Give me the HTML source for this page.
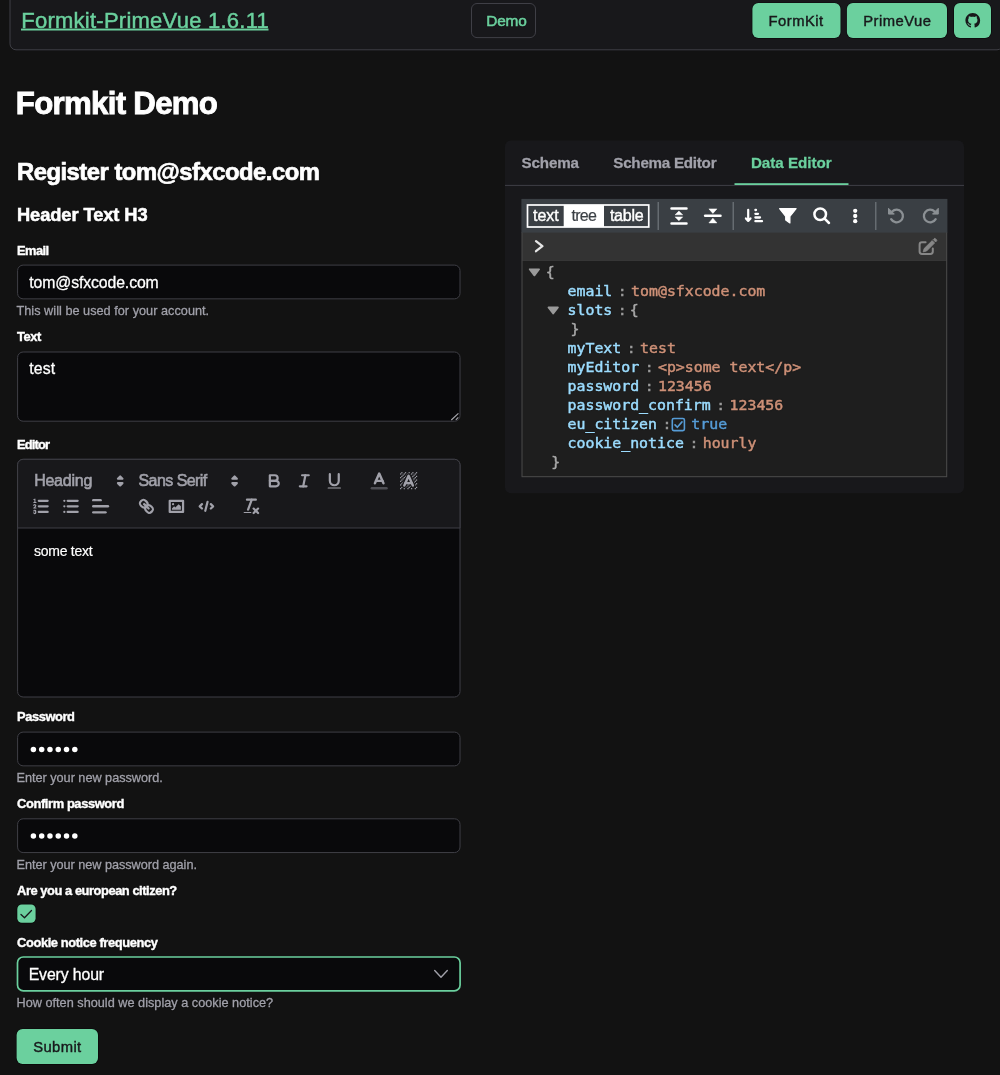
<!DOCTYPE html>
<html lang="en">
<head>
<meta charset="utf-8">
<title>Formkit-PrimeVue Demo</title>
<style>
html,body{margin:0;padding:0;background:#121212;}
body{width:1000px;height:1075px;position:relative;overflow:hidden;font-family:"Liberation Sans",sans-serif;color:#fff;}
*{box-sizing:border-box;}
.a{position:absolute;}
.t{position:absolute;white-space:pre;line-height:1;text-shadow:0 0 1.2px rgba(0,0,0,.75);}
.t.d{text-shadow:none;}
svg{position:absolute;overflow:visible;}
.q{stroke:#a1a1aa;fill:none;stroke-width:2;stroke-linecap:round;stroke-linejoin:round;}
.qf{fill:#a1a1aa;stroke:none;}
.qt{stroke-width:1;}
</style>
</head>
<body>
<svg style="left:0;top:0" width="1000" height="1075" viewBox="0 0 1000 1075">
<rect x="10.0" y="-10" width="993.00" height="59.80" rx="6" fill="#18181b" stroke="#3f3f46" stroke-width="1"/>
<rect x="471.5" y="3.5" width="64.00" height="34.10" rx="5.5" fill="none" stroke="#3f3f46" stroke-width="1"/>
<rect x="752.4" y="3.1" width="88.10" height="35.00" rx="6" fill="#6bd09e" stroke="rgba(0,0,0,.55)" stroke-width="1.4" paint-order="stroke"/>
<rect x="846.9" y="3.1" width="100.10" height="35.00" rx="6" fill="#6bd09e" stroke="rgba(0,0,0,.55)" stroke-width="1.4" paint-order="stroke"/>
<rect x="954.0" y="3.1" width="37.00" height="35.00" rx="6" fill="#6bd09e" stroke="rgba(0,0,0,.55)" stroke-width="1.4" paint-order="stroke"/>
<rect x="17.6" y="265.1" width="442.40" height="33.75" rx="5.5" fill="#09090b" stroke="#3f3f46" stroke-width="1"/>
<rect x="17.6" y="352.0" width="442.40" height="69.20" rx="5.5" fill="#09090b" stroke="#3f3f46" stroke-width="1"/>
<rect x="17.6" y="459.3" width="442.40" height="237.70" rx="5.5" fill="#09090b" stroke="#3f3f46" stroke-width="1"/>
<path d="M17.6 528V464.8A5.5 5.5 0 0 1 23.1 459.3H454.5A5.5 5.5 0 0 1 460.0 464.8V528Z" fill="#18181b" stroke="#3f3f46" stroke-width="1"/>
<rect x="17.6" y="732.1" width="442.40" height="33.75" rx="5.5" fill="#09090b" stroke="#3f3f46" stroke-width="1"/>
<rect x="17.6" y="818.8" width="442.40" height="33.75" rx="5.5" fill="#09090b" stroke="#3f3f46" stroke-width="1"/>
<rect x="17.5" y="957.0" width="442.60" height="33.90" rx="5.8" fill="#09090b" stroke="#6bd09e" stroke-width="1.7"/>
<rect x="17.3" y="904.4" width="18.30" height="18.30" rx="4.5" fill="#6bd09e" stroke="rgba(0,0,0,.55)" stroke-width="1.4" paint-order="stroke"/>
<rect x="16.6" y="1029.1" width="81.40" height="35.00" rx="6" fill="#6bd09e" stroke="rgba(0,0,0,.55)" stroke-width="1.4" paint-order="stroke"/>
<rect x="505" y="140.5" width="459.00" height="352.70" rx="6" fill="#18181b"/>
<rect x="505" y="184.9" width="459" height="1" fill="#3f3f46"/>
<rect x="734.5" y="183.2" width="114" height="1.8" fill="#6bd09e"/>
<rect x="521.5" y="232" width="425.7" height="245.2" fill="#4b4b4b"/>
<rect x="522.5" y="260.8" width="423.7" height="215.4" fill="#1e1e1e"/>
<rect x="522.5" y="232" width="423.7" height="28.8" fill="#333333"/>
<rect x="521.4" y="198.9" width="426" height="33.7" fill="#3a3f44"/>
</svg>

<svg style="left:0;top:0" width="1000" height="1075" viewBox="0 0 1000 1075">
<g transform="translate(965.4,13.1) scale(0.92)"><path fill="#18181b" d="M8 0C3.58 0 0 3.58 0 8c0 3.54 2.29 6.53 5.47 7.59.4.07.55-.17.55-.38 0-.19-.01-.82-.01-1.49-2.01.37-2.53-.49-2.69-.94-.09-.23-.48-.94-.82-1.13-.28-.15-.68-.52-.01-.53.63-.01 1.08.58 1.23.82.72 1.21 1.87.87 2.33.66.07-.52.28-.87.51-1.07-1.78-.2-3.64-.89-3.64-3.95 0-.87.31-1.59.82-2.15-.08-.2-.36-1.02.08-2.12 0 0 .67-.21 2.2.82.64-.18 1.32-.27 2-.27.68 0 1.36.09 2 .27 1.53-1.04 2.2-.82 2.2-.82.44 1.1.16 1.92.08 2.12.51.56.82 1.27.82 2.15 0 3.07-1.87 3.75-3.65 3.95.29.25.54.73.54 1.48 0 1.07-.01 1.93-.01 2.2 0 .21.15.46.55.38A8.013 8.013 0 0016 8c0-4.42-3.58-8-8-8z"/></g>
<path d="M458.4 413.3L451.3 420M458.3 417.4L455.8 419.8" stroke="#a8a8ae" stroke-width="1.1" fill="none"/>
<path d="M21.0 914.5L24.5 917.7L31.5 910.5" stroke="#18181b" stroke-width="1.3" fill="none" stroke-linecap="round" stroke-linejoin="round"/>
<path d="M434.7 970.6L441 977.2L447.3 970.6" stroke="#a1a1aa" stroke-width="1.4" fill="none" stroke-linecap="round" stroke-linejoin="round"/>
</svg>
<svg style="left:0;top:0" width="1000" height="1075" viewBox="0 0 1000 1075"><g transform="translate(110.2,470.90000000000003) scale(1.1111)"><polygon class="q" points="7 11 9 13 11 11 7 11"/><polygon class="q" points="7 7 9 5 11 7 7 7"/></g>
<g transform="translate(224.6,470.90000000000003) scale(1.1111)"><polygon class="q" points="7 11 9 13 11 11 7 11"/><polygon class="q" points="7 7 9 5 11 7 7 7"/></g>
<g transform="translate(264.3,470.8) scale(1.1111)"><path class="q" d="M5,4H9.5A2.5,2.5,0,0,1,12,6.5v0A2.5,2.5,0,0,1,9.5,9H5V4Z"/><path class="q" d="M5,9h5.5A2.5,2.5,0,0,1,13,11.5v0A2.5,2.5,0,0,1,10.5,14H5V9Z"/></g>
<g transform="translate(294.3,470.8) scale(1.1111)"><line class="q" x1="7" x2="13" y1="4" y2="4"/><line class="q" x1="5" x2="11" y1="14" y2="14"/><line class="q" x1="8" x2="10" y1="14" y2="4"/></g>
<g transform="translate(324.3,470.8) scale(1.1111)"><path class="q" d="M5,3V9a4.012,4.012,0,0,0,4,4H9a4.012,4.012,0,0,0,4-4V3"/><rect class="qf" height="1" rx="0.5" ry="0.5" width="12" x="3" y="15"/></g>
<g transform="translate(368.2,469.85) scale(1.2222)"><line class="q" style="opacity:.4" x1="3" x2="15" y1="15" y2="15"/><polyline class="q" points="5.5 11 9 3 12.5 11"/><line class="q" x1="11.63" x2="6.38" y1="9" y2="9"/></g>
<g transform="translate(397.6,469.7) scale(1.2222)"><g><rect class="qf" x="3" y="2" width="1" height="1"/><rect class="qf" x="6" y="2" width="1" height="1"/><rect class="qf" x="9" y="2" width="1" height="1"/><rect class="qf" x="12" y="2" width="1" height="1"/><rect class="qf" x="15" y="2" width="1" height="1"/><rect class="qf" x="2" y="3" width="1" height="1"/><rect class="qf" x="5" y="3" width="1" height="1"/><rect class="qf" x="8" y="3" width="1" height="1"/><rect class="qf" x="11" y="3" width="1" height="1"/><rect class="qf" x="14" y="3" width="1" height="1"/><rect class="qf" x="4" y="4" width="1" height="1"/><rect class="qf" x="7" y="4" width="1" height="1"/><rect class="qf" x="10" y="4" width="1" height="1"/><rect class="qf" x="13" y="4" width="1" height="1"/><rect class="qf" x="3" y="5" width="1" height="1"/><rect class="qf" x="6" y="5" width="1" height="1"/><rect class="qf" x="9" y="5" width="1" height="1"/><rect class="qf" x="12" y="5" width="1" height="1"/><rect class="qf" x="15" y="5" width="1" height="1"/><rect class="qf" x="2" y="6" width="1" height="1"/><rect class="qf" x="5" y="6" width="1" height="1"/><rect class="qf" x="8" y="6" width="1" height="1"/><rect class="qf" x="11" y="6" width="1" height="1"/><rect class="qf" x="14" y="6" width="1" height="1"/><rect class="qf" x="4" y="7" width="1" height="1"/><rect class="qf" x="7" y="7" width="1" height="1"/><rect class="qf" x="10" y="7" width="1" height="1"/><rect class="qf" x="13" y="7" width="1" height="1"/><rect class="qf" x="3" y="8" width="1" height="1"/><rect class="qf" x="6" y="8" width="1" height="1"/><rect class="qf" x="9" y="8" width="1" height="1"/><rect class="qf" x="12" y="8" width="1" height="1"/><rect class="qf" x="15" y="8" width="1" height="1"/><rect class="qf" x="2" y="9" width="1" height="1"/><rect class="qf" x="5" y="9" width="1" height="1"/><rect class="qf" x="8" y="9" width="1" height="1"/><rect class="qf" x="11" y="9" width="1" height="1"/><rect class="qf" x="14" y="9" width="1" height="1"/><rect class="qf" x="4" y="10" width="1" height="1"/><rect class="qf" x="7" y="10" width="1" height="1"/><rect class="qf" x="10" y="10" width="1" height="1"/><rect class="qf" x="13" y="10" width="1" height="1"/><rect class="qf" x="3" y="11" width="1" height="1"/><rect class="qf" x="6" y="11" width="1" height="1"/><rect class="qf" x="9" y="11" width="1" height="1"/><rect class="qf" x="12" y="11" width="1" height="1"/><rect class="qf" x="15" y="11" width="1" height="1"/><rect class="qf" x="2" y="12" width="1" height="1"/><rect class="qf" x="5" y="12" width="1" height="1"/><rect class="qf" x="8" y="12" width="1" height="1"/><rect class="qf" x="11" y="12" width="1" height="1"/><rect class="qf" x="14" y="12" width="1" height="1"/><rect class="qf" x="4" y="13" width="1" height="1"/><rect class="qf" x="7" y="13" width="1" height="1"/><rect class="qf" x="10" y="13" width="1" height="1"/><rect class="qf" x="13" y="13" width="1" height="1"/><rect class="qf" x="3" y="14" width="1" height="1"/><rect class="qf" x="6" y="14" width="1" height="1"/><rect class="qf" x="9" y="14" width="1" height="1"/><rect class="qf" x="12" y="14" width="1" height="1"/><rect class="qf" x="15" y="14" width="1" height="1"/><rect class="qf" x="2" y="15" width="1" height="1"/><rect class="qf" x="5" y="15" width="1" height="1"/><rect class="qf" x="8" y="15" width="1" height="1"/><rect class="qf" x="11" y="15" width="1" height="1"/><rect class="qf" x="14" y="15" width="1" height="1"/></g><polyline points="5.5 13 9 5 12.5 13" fill="none" stroke="#18181b" stroke-width="4" stroke-linecap="round" stroke-linejoin="round"/><polyline class="q" points="5.5 13 9 5 12.5 13"/><line class="q" x1="11.63" x2="6.38" y1="11" y2="11"/></g>
<g transform="translate(31,496.35) scale(1.1111)"><line class="q" x1="7" x2="15" y1="4" y2="4"/><line class="q" x1="7" x2="15" y1="9" y2="9"/><line class="q" x1="7" x2="15" y1="14" y2="14"/><line class="q qt" x1="2.5" x2="4.5" y1="5.5" y2="5.5"/><path class="qf" d="M3.5,6A0.5,0.5,0,0,1,3,5.5V3.085l-0.276.138A0.5,0.5,0,0,1,2.053,3c-0.124-.247-0.023-0.324.224-0.447l1-.5A0.5,0.5,0,0,1,4,2.5v3A0.5,0.5,0,0,1,3.5,6Z"/><path class="q qt" d="M4.5,10.5h-2c0-.234,1.85-1.076,1.85-2.234A0.959,0.959,0,0,0,2.5,8.156"/><path class="q qt" d="M2.5,14.846a0.959,0.959,0,0,0,1.85-.109A0.7,0.7,0,0,0,3.75,14a0.688,0.688,0,0,0,.6-0.736,0.959,0.959,0,0,0-1.85-.109"/></g>
<g transform="translate(61,496.35) scale(1.1111)"><line class="q" x1="6" x2="15" y1="4" y2="4"/><line class="q" x1="6" x2="15" y1="9" y2="9"/><line class="q" x1="6" x2="15" y1="14" y2="14"/><line class="q" x1="3" x2="3" y1="4" y2="4"/><line class="q" x1="3" x2="3" y1="9" y2="9"/><line class="q" x1="3" x2="3" y1="14" y2="14"/></g>
<g transform="translate(89.6,495.25) scale(1.2222)"><line class="q" x1="3" x2="15" y1="9" y2="9"/><line class="q" x1="3" x2="13" y1="14" y2="14"/><line class="q" x1="3" x2="9" y1="4" y2="4"/></g>
<g transform="translate(136.4,496.35) scale(1.1111)"><line class="q" x1="7" x2="11" y1="7" y2="11"/><path class="q" d="M8.9,4.577a3.476,3.476,0,0,1,.36,4.679A3.476,3.476,0,0,1,4.577,8.9C3.185,7.5,2.035,6.4,4.217,4.217S7.5,3.185,8.9,4.577Z"/><path class="q" d="M13.423,9.1a3.476,3.476,0,0,0-4.679-.36,3.476,3.476,0,0,0,.36,4.679c1.392,1.392,2.5,2.542,4.679.36S14.815,10.5,13.423,9.1Z"/></g>
<g transform="translate(166.4,496.35) scale(1.1111)"><rect class="q" height="10" width="12" x="3" y="4"/><circle class="qf" cx="6" cy="7" r="1"/><polyline class="qf" points="5 12 5 11 7 9 8 10 11 7 13 9 13 12 5 12"/></g>
<g transform="translate(196.4,496.35) scale(1.1111)"><polyline class="q" points="5 7 3 9 5 11"/><polyline class="q" points="13 7 15 9 13 11"/><line class="q" x1="10" x2="8" y1="5" y2="13"/></g>
<g transform="translate(241.4,496.35) scale(1.1111)"><line class="q" x1="5" x2="13" y1="3" y2="3"/><line class="q" x1="6" x2="9.35" y1="12" y2="3"/><line class="q" x1="11" x2="15" y1="11" y2="15"/><line class="q" x1="15" x2="11" y1="11" y2="15"/><rect class="qf" height="1" rx="0.5" ry="0.5" width="7" x="2" y="14"/></g></svg>
<svg style="left:0;top:0" width="1000" height="1075" viewBox="0 0 1000 1075"><circle cx="33.40" cy="749.4" r="2.75" fill="#fff"/><circle cx="41.68" cy="749.4" r="2.75" fill="#fff"/><circle cx="49.96" cy="749.4" r="2.75" fill="#fff"/><circle cx="58.24" cy="749.4" r="2.75" fill="#fff"/><circle cx="66.52" cy="749.4" r="2.75" fill="#fff"/><circle cx="74.80" cy="749.4" r="2.75" fill="#fff"/><circle cx="33.40" cy="835.9" r="2.75" fill="#fff"/><circle cx="41.68" cy="835.9" r="2.75" fill="#fff"/><circle cx="49.96" cy="835.9" r="2.75" fill="#fff"/><circle cx="58.24" cy="835.9" r="2.75" fill="#fff"/><circle cx="66.52" cy="835.9" r="2.75" fill="#fff"/><circle cx="74.80" cy="835.9" r="2.75" fill="#fff"/></svg>
<svg style="left:0;top:0" width="1000" height="1075" viewBox="0 0 1000 1075"><rect x="21" y="28.6" width="247.5" height="1.9" fill="#6bd09e"/>
<rect x="563.7" y="205" width="40.3" height="22" fill="#fff"/>
<rect x="527.5" y="205" width="121.25" height="22" fill="none" stroke="#fff" stroke-width="1.7"/>
<rect x="657.6" y="202" width="1.2" height="28" fill="#72787d"/>
<rect x="732.6" y="202" width="1.2" height="28" fill="#72787d"/>
<rect x="875.1999999999999" y="202" width="1.2" height="28" fill="#72787d"/>
<path d="M671.5 208.5H686.5M671.5 223.4H686.5" stroke="#fff" stroke-width="2.5" stroke-linecap="round" fill="none"/>
<path d="M678.9 211.1L682.7 214.8H675.1Z M678.9 220.8L682.7 216.9H675.1Z" fill="#fff" stroke="#fff" stroke-width="0.5" stroke-linejoin="round"/>
<path d="M705.1 215.8H720.5" stroke="#fff" stroke-width="2.5" stroke-linecap="round" fill="none"/>
<path d="M712.9 213.4L716.9 208.9H708.9Z M712.9 218.2L716.9 222.9H708.9Z" fill="#fff" stroke="#fff" stroke-width="0.5" stroke-linejoin="round"/>
<path d="M748.2 209.8V220.6M745.9 218.4L748.2 220.9L750.5 218.4" stroke="#fff" stroke-width="2.2" stroke-linecap="round" stroke-linejoin="round" fill="none"/>
<path d="M755.4 210H756M755.4 213.8H758M755.4 217.5H760M755.4 221.2H762" stroke="#fff" stroke-width="2.3" stroke-linecap="round" fill="none"/>
<path d="M779.6 208.7H796.1L789.9 216.4V222.9L785.7 219.9V216.4Z" fill="#fff" stroke="#fff" stroke-width="1.2" stroke-linejoin="round"/>
<circle cx="820.2" cy="214.3" r="5.8" fill="none" stroke="#fff" stroke-width="2.5"/><path d="M824.6 218.7L829 223" stroke="#fff" stroke-width="2.5" stroke-linecap="round"/>
<circle cx="855.2" cy="210.8" r="2.15" fill="#fff"/>
<circle cx="855.2" cy="216" r="2.15" fill="#fff"/>
<circle cx="855.2" cy="221.2" r="2.15" fill="#fff"/>
<path d="M892.15 211.55A6.3 6.3 0 1 1 891.14 219.15" fill="none" stroke="#8b9094" stroke-width="2.3" stroke-linecap="round"/>
<path d="M888.5 208.3V214.1H894.3Z" fill="#8b9094" stroke="#8b9094" stroke-width="1" stroke-linejoin="round"/>
<path d="M934.65 211.55A6.3 6.3 0 1 0 935.66 219.15" fill="none" stroke="#8b9094" stroke-width="2.3" stroke-linecap="round"/>
<path d="M938.3 208.3V214.1H932.5Z" fill="#8b9094" stroke="#8b9094" stroke-width="1" stroke-linejoin="round"/>
<path d="M536 241.2L542.4 246.2L536 251.2" fill="none" stroke="#e6e6e6" stroke-width="2.3" stroke-linecap="round" stroke-linejoin="round"/>
<path d="M925.6 242.3H922A2.4 2.4 0 0 0 919.6 244.7V251.6A2.4 2.4 0 0 0 922 254H930.4A2.4 2.4 0 0 0 932.8 251.6V248.6" fill="none" stroke="#878787" stroke-width="2" stroke-linecap="round"/>
<path d="M932.2 240.6L934.6 243L926.6 251L923.2 251.9L924.1 248.6Z M933.2 239.6L934.1 238.7A1 1 0 0 1 935.5 238.7L936.5 239.7A1 1 0 0 1 936.5 241.1L935.6 242Z" fill="#878787" stroke="#878787" stroke-width="0.8" stroke-linejoin="round"/>
<path d="M529.6999999999999 269.29999999999995H539.1L534.4 275.4Z" fill="#9a9a9a" stroke="#9a9a9a" stroke-width="1.8" stroke-linejoin="round"/>
<path d="M548.5 307.4H557.9000000000001L553.2 313.5Z" fill="#9a9a9a" stroke="#9a9a9a" stroke-width="1.8" stroke-linejoin="round"/>
<rect x="672.3" y="418.5" width="12.1" height="12.1" rx="1.5" fill="none" stroke="#569cd6" stroke-width="1.6"/><path d="M675 424.9L677.3 427.3L682 421.9" fill="none" stroke="#569cd6" stroke-width="1.6" stroke-linecap="round" stroke-linejoin="round"/></svg>

<div class="a" style="left:0;top:0;width:1000px;height:1075px;will-change:transform;">
<span class="t" style="left:21.30px;top:10.00px;font-size:22px;font-weight:400;letter-spacing:0.245px;color:#6bd09e;font-family:'Liberation Sans', sans-serif;-webkit-text-stroke:0.5px #6bd09e;">Formkit-PrimeVue 1.6.11</span>
<span class="t" style="left:486.30px;top:13.00px;font-size:15.4px;font-weight:400;letter-spacing:-0.200px;color:#6bd09e;font-family:'Liberation Sans', sans-serif;-webkit-text-stroke:0.55px #6bd09e;">Demo</span>
<span class="t d" style="left:768.50px;top:13.90px;font-size:14.8px;font-weight:400;letter-spacing:0.483px;color:#18181b;font-family:'Liberation Sans', sans-serif;-webkit-text-stroke:0.4px #18181b;">FormKit</span>
<span class="t d" style="left:863.30px;top:13.90px;font-size:14.8px;font-weight:400;letter-spacing:0.457px;color:#18181b;font-family:'Liberation Sans', sans-serif;-webkit-text-stroke:0.4px #18181b;">PrimeVue</span>
<span class="t" style="left:15.80px;top:87.60px;font-size:31.2px;font-weight:700;letter-spacing:-0.691px;color:#fff;font-family:'Liberation Sans', sans-serif;-webkit-text-stroke:0.9px #fff;">Formkit Demo</span>
<span class="t" style="left:17.00px;top:160.40px;font-size:23.8px;font-weight:700;letter-spacing:-0.491px;color:#fff;font-family:'Liberation Sans', sans-serif;-webkit-text-stroke:0.7px #fff;">Register tom@sfxcode.com</span>
<span class="t" style="left:17.00px;top:206.20px;font-size:18.3px;font-weight:700;letter-spacing:-0.085px;color:#fff;font-family:'Liberation Sans', sans-serif;-webkit-text-stroke:0.55px #fff;">Header Text H3</span>
<span class="t" style="left:17.10px;top:245.40px;font-size:12.9px;font-weight:700;letter-spacing:-0.600px;color:#fff;font-family:'Liberation Sans', sans-serif;-webkit-text-stroke:0.4px #fff;">Email</span>
<span class="t" style="left:17.10px;top:331.40px;font-size:12.9px;font-weight:700;letter-spacing:-0.467px;color:#fff;font-family:'Liberation Sans', sans-serif;-webkit-text-stroke:0.4px #fff;">Text</span>
<span class="t" style="left:17.10px;top:439.40px;font-size:12.9px;font-weight:700;letter-spacing:-0.880px;color:#fff;font-family:'Liberation Sans', sans-serif;-webkit-text-stroke:0.4px #fff;">Editor</span>
<span class="t" style="left:17.10px;top:711.40px;font-size:12.9px;font-weight:700;letter-spacing:-0.429px;color:#fff;font-family:'Liberation Sans', sans-serif;-webkit-text-stroke:0.4px #fff;">Password</span>
<span class="t" style="left:17.10px;top:798.40px;font-size:12.9px;font-weight:700;letter-spacing:-0.400px;color:#fff;font-family:'Liberation Sans', sans-serif;-webkit-text-stroke:0.4px #fff;">Confirm password</span>
<span class="t" style="left:17.10px;top:885.40px;font-size:12.9px;font-weight:700;letter-spacing:-0.454px;color:#fff;font-family:'Liberation Sans', sans-serif;-webkit-text-stroke:0.4px #fff;">Are you a european citizen?</span>
<span class="t" style="left:17.10px;top:937.00px;font-size:12.9px;font-weight:700;letter-spacing:-0.409px;color:#fff;font-family:'Liberation Sans', sans-serif;-webkit-text-stroke:0.4px #fff;">Cookie notice frequency</span>
<span class="t" style="left:29.30px;top:274.70px;font-size:15.8px;font-weight:400;letter-spacing:-0.114px;color:#fff;font-family:'Liberation Sans', sans-serif;-webkit-text-stroke:0.3px #fff;">tom@sfxcode.com</span>
<span class="t" style="left:29.30px;top:360.70px;font-size:15.8px;font-weight:400;letter-spacing:0.133px;color:#fff;font-family:'Liberation Sans', sans-serif;-webkit-text-stroke:0.3px #fff;">test</span>
<span class="t" style="left:28.70px;top:966.70px;font-size:15.8px;font-weight:400;letter-spacing:-0.111px;color:#fff;font-family:'Liberation Sans', sans-serif;-webkit-text-stroke:0.3px #fff;">Every hour</span>
<span class="t" style="left:16.50px;top:305.20px;font-size:12.7px;font-weight:400;letter-spacing:0.024px;color:#a1a1aa;font-family:'Liberation Sans', sans-serif;-webkit-text-stroke:0.3px #a1a1aa;">This will be used for your account.</span>
<span class="t" style="left:16.50px;top:772.00px;font-size:12.7px;font-weight:400;letter-spacing:-0.017px;color:#a1a1aa;font-family:'Liberation Sans', sans-serif;-webkit-text-stroke:0.3px #a1a1aa;">Enter your new password.</span>
<span class="t" style="left:16.50px;top:858.60px;font-size:12.7px;font-weight:400;letter-spacing:-0.028px;color:#a1a1aa;font-family:'Liberation Sans', sans-serif;-webkit-text-stroke:0.3px #a1a1aa;">Enter your new password again.</span>
<span class="t" style="left:16.50px;top:997.00px;font-size:12.7px;font-weight:400;letter-spacing:0.014px;color:#a1a1aa;font-family:'Liberation Sans', sans-serif;-webkit-text-stroke:0.3px #a1a1aa;">How often should we display a cookie notice?</span>
<span class="t d" style="left:33.30px;top:1039.70px;font-size:14.8px;font-weight:400;letter-spacing:0.360px;color:#18181b;font-family:'Liberation Sans', sans-serif;-webkit-text-stroke:0.4px #18181b;">Submit</span>
<span class="t" style="left:34.15px;top:472.60px;font-size:16px;font-weight:400;letter-spacing:-0.242px;color:#a1a1aa;font-family:'Liberation Sans', sans-serif;-webkit-text-stroke:0.6px #a1a1aa;">Heading</span>
<span class="t" style="left:138.50px;top:472.60px;font-size:16px;font-weight:400;letter-spacing:-0.556px;color:#a1a1aa;font-family:'Liberation Sans', sans-serif;-webkit-text-stroke:0.6px #a1a1aa;">Sans Serif</span>
<span class="t" style="left:34.00px;top:543.70px;font-size:14px;font-weight:400;letter-spacing:-0.263px;color:#fff;font-family:'Liberation Sans', sans-serif;-webkit-text-stroke:0.2px #fff;">some text</span>
<span class="t" style="left:521.55px;top:155.00px;font-size:15.2px;font-weight:700;letter-spacing:-0.170px;color:#a1a1aa;font-family:'Liberation Sans', sans-serif;-webkit-text-stroke:0.3px #a1a1aa;">Schema</span>
<span class="t" style="left:613.30px;top:155.00px;font-size:15.2px;font-weight:700;letter-spacing:-0.258px;color:#a1a1aa;font-family:'Liberation Sans', sans-serif;-webkit-text-stroke:0.3px #a1a1aa;">Schema Editor</span>
<span class="t" style="left:750.90px;top:155.00px;font-size:15.2px;font-weight:700;letter-spacing:-0.020px;color:#6bd09e;font-family:'Liberation Sans', sans-serif;-webkit-text-stroke:0.3px #6bd09e;">Data Editor</span>
<span class="t" style="left:533.05px;top:208.00px;font-size:16px;font-weight:400;letter-spacing:-0.033px;color:#fff;font-family:'Liberation Sans', sans-serif;-webkit-text-stroke:0.45px #fff;">text</span>
<span class="t d" style="left:571.40px;top:208.00px;font-size:16px;font-weight:400;letter-spacing:-0.667px;color:#3a3f44;font-family:'Liberation Sans', sans-serif;-webkit-text-stroke:0.2px #3a3f44;">tree</span>
<span class="t" style="left:609.90px;top:208.00px;font-size:16px;font-weight:400;letter-spacing:-0.250px;color:#fff;font-family:'Liberation Sans', sans-serif;-webkit-text-stroke:0.45px #fff;">table</span>
<span class="t" style="left:545.70px;top:265.00px;font-size:14.87px;font-weight:400;letter-spacing:0.000px;color:#a8a8a8;font-family:'DejaVu Sans Mono', 'Liberation Mono', monospace;-webkit-text-stroke:0.5px #a8a8a8;">{</span>
<span class="t" style="left:567.55px;top:284.00px;font-size:14.87px;font-weight:400;letter-spacing:0.000px;color:#9cdcfe;font-family:'DejaVu Sans Mono', 'Liberation Mono', monospace;-webkit-text-stroke:0.5px #9cdcfe;">email</span>
<span class="t" style="left:617.85px;top:284.00px;font-size:14.87px;font-weight:400;letter-spacing:0.000px;color:#9a9a9a;font-family:'DejaVu Sans Mono', 'Liberation Mono', monospace;-webkit-text-stroke:0.5px #9a9a9a;">:</span>
<span class="t" style="left:631.10px;top:284.00px;font-size:14.87px;font-weight:400;letter-spacing:0.000px;color:#ce9178;font-family:'DejaVu Sans Mono', 'Liberation Mono', monospace;-webkit-text-stroke:0.5px #ce9178;">tom@sfxcode.com</span>
<span class="t" style="left:567.55px;top:341.00px;font-size:14.87px;font-weight:400;letter-spacing:0.000px;color:#9cdcfe;font-family:'DejaVu Sans Mono', 'Liberation Mono', monospace;-webkit-text-stroke:0.5px #9cdcfe;">myText</span>
<span class="t" style="left:626.80px;top:341.00px;font-size:14.87px;font-weight:400;letter-spacing:0.000px;color:#9a9a9a;font-family:'DejaVu Sans Mono', 'Liberation Mono', monospace;-webkit-text-stroke:0.5px #9a9a9a;">:</span>
<span class="t" style="left:640.05px;top:341.00px;font-size:14.87px;font-weight:400;letter-spacing:0.000px;color:#ce9178;font-family:'DejaVu Sans Mono', 'Liberation Mono', monospace;-webkit-text-stroke:0.5px #ce9178;">test</span>
<span class="t" style="left:567.55px;top:360.00px;font-size:14.87px;font-weight:400;letter-spacing:0.000px;color:#9cdcfe;font-family:'DejaVu Sans Mono', 'Liberation Mono', monospace;-webkit-text-stroke:0.5px #9cdcfe;">myEditor</span>
<span class="t" style="left:644.70px;top:360.00px;font-size:14.87px;font-weight:400;letter-spacing:0.000px;color:#9a9a9a;font-family:'DejaVu Sans Mono', 'Liberation Mono', monospace;-webkit-text-stroke:0.5px #9a9a9a;">:</span>
<span class="t" style="left:657.95px;top:360.00px;font-size:14.87px;font-weight:400;letter-spacing:0.000px;color:#ce9178;font-family:'DejaVu Sans Mono', 'Liberation Mono', monospace;-webkit-text-stroke:0.5px #ce9178;">&lt;p&gt;some text&lt;/p&gt;</span>
<span class="t" style="left:567.55px;top:379.00px;font-size:14.87px;font-weight:400;letter-spacing:0.000px;color:#9cdcfe;font-family:'DejaVu Sans Mono', 'Liberation Mono', monospace;-webkit-text-stroke:0.5px #9cdcfe;">password</span>
<span class="t" style="left:644.70px;top:379.00px;font-size:14.87px;font-weight:400;letter-spacing:0.000px;color:#9a9a9a;font-family:'DejaVu Sans Mono', 'Liberation Mono', monospace;-webkit-text-stroke:0.5px #9a9a9a;">:</span>
<span class="t" style="left:657.95px;top:379.00px;font-size:14.87px;font-weight:400;letter-spacing:0.000px;color:#ce9178;font-family:'DejaVu Sans Mono', 'Liberation Mono', monospace;-webkit-text-stroke:0.5px #ce9178;">123456</span>
<span class="t" style="left:567.55px;top:398.00px;font-size:14.87px;font-weight:400;letter-spacing:0.000px;color:#9cdcfe;font-family:'DejaVu Sans Mono', 'Liberation Mono', monospace;-webkit-text-stroke:0.5px #9cdcfe;">password_confirm</span>
<span class="t" style="left:716.30px;top:398.00px;font-size:14.87px;font-weight:400;letter-spacing:0.000px;color:#9a9a9a;font-family:'DejaVu Sans Mono', 'Liberation Mono', monospace;-webkit-text-stroke:0.5px #9a9a9a;">:</span>
<span class="t" style="left:729.55px;top:398.00px;font-size:14.87px;font-weight:400;letter-spacing:0.000px;color:#ce9178;font-family:'DejaVu Sans Mono', 'Liberation Mono', monospace;-webkit-text-stroke:0.5px #ce9178;">123456</span>
<span class="t" style="left:567.55px;top:436.00px;font-size:14.87px;font-weight:400;letter-spacing:0.000px;color:#9cdcfe;font-family:'DejaVu Sans Mono', 'Liberation Mono', monospace;-webkit-text-stroke:0.5px #9cdcfe;">cookie_notice</span>
<span class="t" style="left:689.45px;top:436.00px;font-size:14.87px;font-weight:400;letter-spacing:0.000px;color:#9a9a9a;font-family:'DejaVu Sans Mono', 'Liberation Mono', monospace;-webkit-text-stroke:0.5px #9a9a9a;">:</span>
<span class="t" style="left:702.70px;top:436.00px;font-size:14.87px;font-weight:400;letter-spacing:0.000px;color:#ce9178;font-family:'DejaVu Sans Mono', 'Liberation Mono', monospace;-webkit-text-stroke:0.5px #ce9178;">hourly</span>
<span class="t" style="left:567.55px;top:303.00px;font-size:14.87px;font-weight:400;letter-spacing:0.000px;color:#9cdcfe;font-family:'DejaVu Sans Mono', 'Liberation Mono', monospace;-webkit-text-stroke:0.5px #9cdcfe;">slots</span>
<span class="t" style="left:617.85px;top:303.00px;font-size:14.87px;font-weight:400;letter-spacing:0.000px;color:#9a9a9a;font-family:'DejaVu Sans Mono', 'Liberation Mono', monospace;-webkit-text-stroke:0.5px #9a9a9a;">:</span>
<span class="t" style="left:629.70px;top:303.00px;font-size:14.87px;font-weight:400;letter-spacing:0.000px;color:#a8a8a8;font-family:'DejaVu Sans Mono', 'Liberation Mono', monospace;-webkit-text-stroke:0.5px #a8a8a8;">{</span>
<span class="t" style="left:570.50px;top:322.00px;font-size:14.87px;font-weight:400;letter-spacing:0.000px;color:#a8a8a8;font-family:'DejaVu Sans Mono', 'Liberation Mono', monospace;-webkit-text-stroke:0.5px #a8a8a8;">}</span>
<span class="t" style="left:567.55px;top:417.00px;font-size:14.87px;font-weight:400;letter-spacing:0.000px;color:#9cdcfe;font-family:'DejaVu Sans Mono', 'Liberation Mono', monospace;-webkit-text-stroke:0.5px #9cdcfe;">eu_citizen</span>
<span class="t" style="left:662.60px;top:417.00px;font-size:14.87px;font-weight:400;letter-spacing:0.000px;color:#9a9a9a;font-family:'DejaVu Sans Mono', 'Liberation Mono', monospace;-webkit-text-stroke:0.5px #9a9a9a;">:</span>
<span class="t" style="left:691.30px;top:417.00px;font-size:14.87px;font-weight:400;letter-spacing:0.000px;color:#569cd6;font-family:'DejaVu Sans Mono', 'Liberation Mono', monospace;-webkit-text-stroke:0.5px #569cd6;">true</span>
<span class="t" style="left:551.30px;top:455.00px;font-size:14.87px;font-weight:400;letter-spacing:0.000px;color:#a8a8a8;font-family:'DejaVu Sans Mono', 'Liberation Mono', monospace;-webkit-text-stroke:0.5px #a8a8a8;">}</span>
</div>
</body>
</html>
